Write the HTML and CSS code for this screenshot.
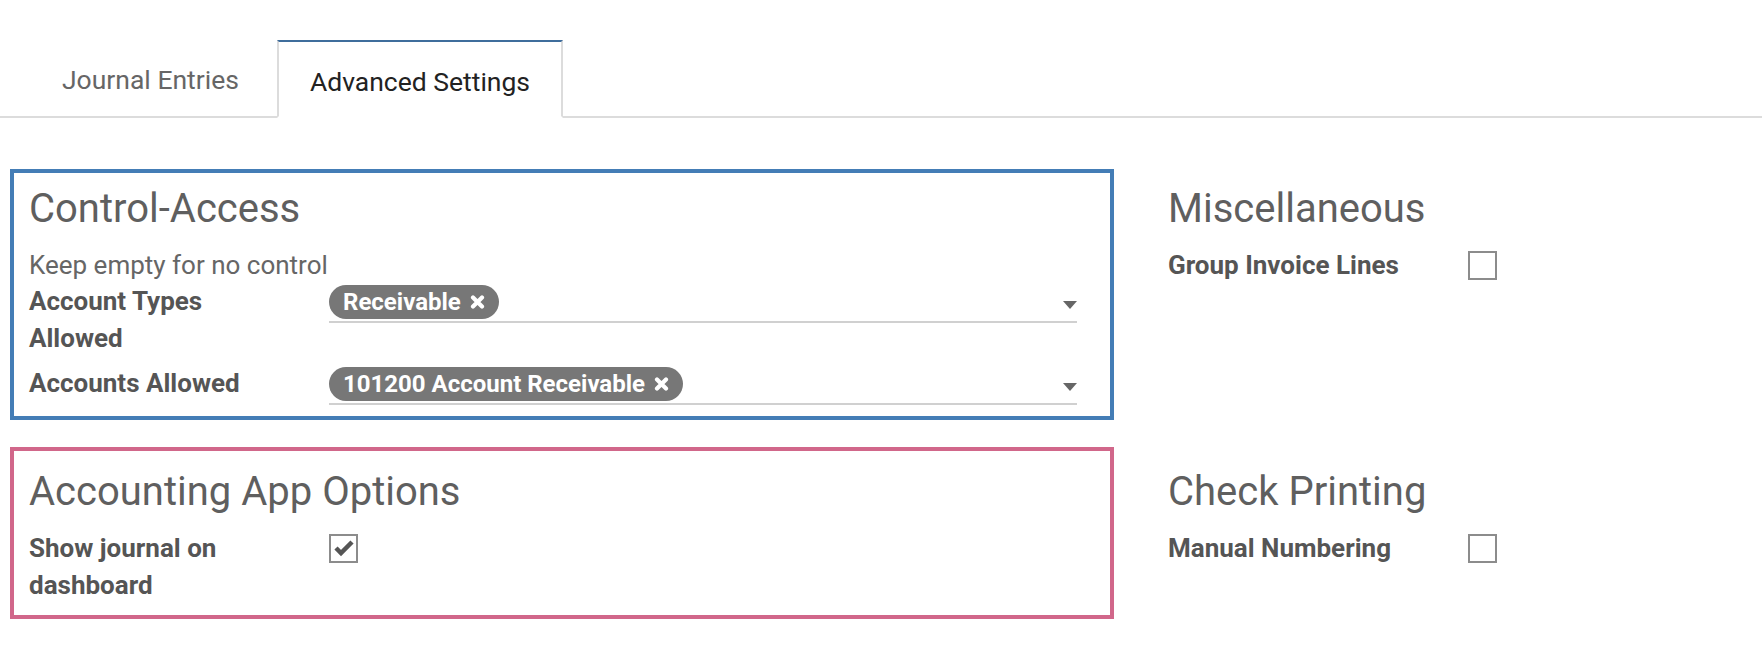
FILE: index.html
```html
<!DOCTYPE html>
<html lang="en">
<head>
    <meta charset="UTF-8">
    <meta name="viewport" content="width=device-width, initial-scale=1.0">
    <title>Journal - Advanced Settings</title>
    <link rel="stylesheet" href="styles.css">
</head>
<body>
<div class="notebook">
    <ul class="nav-tabs">
        <li class="tab">Journal Entries</li>
        <li class="tab active">Advanced Settings</li>
    </ul>
    <div class="tab-pane">
        <div class="group boxed boxed-blue">
            <h2 class="separator">Control-Access</h2>
            <div class="help">Keep empty for no control</div>
            <div class="field-row">
                <div class="label">Account Types Allowed</div>
                <div class="field">
                    <span class="tag">Receivable
                        <svg class="tag-x" viewBox="0 0 15 14" width="15" height="14"><path d="M3 2.5 L12 11.5 M12 2.5 L3 11.5"/></svg>
                    </span>
                    <span class="caret"></span>
                </div>
            </div>
            <div class="field-row">
                <div class="label">Accounts Allowed</div>
                <div class="field">
                    <span class="tag">101200 Account Receivable
                        <svg class="tag-x" viewBox="0 0 15 14" width="15" height="14"><path d="M3 2.5 L12 11.5 M12 2.5 L3 11.5"/></svg>
                    </span>
                    <span class="caret"></span>
                </div>
            </div>
        </div>

        <div class="group plain plain-top">
            <h2 class="separator">Miscellaneous</h2>
            <div class="field-row">
                <div class="label">Group Invoice Lines</div>
                <div class="check-cell"><span class="checkbox"></span></div>
            </div>
        </div>

        <div class="group boxed boxed-pink">
            <h2 class="separator">Accounting App Options</h2>
            <div class="field-row">
                <div class="label">Show journal on dashboard</div>
                <div class="check-cell">
                    <span class="checkbox">
                        <svg viewBox="0 0 25 25" width="25" height="25"><path d="M5 12 L10 17 L21 6"/></svg>
                    </span>
                </div>
            </div>
        </div>

        <div class="group plain plain-bottom">
            <h2 class="separator">Check Printing</h2>
            <div class="field-row">
                <div class="label">Manual Numbering</div>
                <div class="check-cell"><span class="checkbox"></span></div>
            </div>
        </div>
    </div>
</div>
</body>
</html>
```

FILE: styles.css
```css
body {
    margin: 0;
    background-color: #ffffff;
    font-family: Roboto, "Liberation Sans", Arial, sans-serif;
    font-size: 26px;
    line-height: 37px;
    color: #4c4c4c;
}

.nav-tabs {
    display: flex;
    gap: 5px;
    margin: 0;
    padding: 40px 0 0 29px;
    list-style: none;
    border-bottom: 2px solid #dcdcdc;
}

.tab {
    margin-bottom: -2px;
    padding: 19px 31px 18px;
    border: 2px solid transparent;
    font-size: 26.5px;
    color: #666666;
}

.tab.active {
    padding-top: 21px;
    padding-bottom: 16px;
    background-color: #ffffff;
    border-color: #dcdcdc;
    border-top-color: #3f6d9c;
    border-bottom-color: #ffffff;
    color: #222222;
}

.tab-pane {
    display: grid;
    grid-template-columns: 1104px 1fr;
    column-gap: 54px;
    row-gap: 27px;
    padding: 51px 0 0 10px;
    align-items: start;
}

.separator {
    margin: 0 0 16px;
    font-size: 40px;
    line-height: 44px;
    font-weight: 400;
    color: #5f5f5f;
}

.boxed {
    border: 4px solid;
    padding: 14px 15px 11px 15px;
}

.boxed-blue {
    border-color: #447db6;
}

.boxed-pink {
    border-color: #d1678a;
    padding-top: 19px;
    padding-bottom: 11px;
}

.plain-top {
    padding-top: 18px;
}

.plain-bottom {
    padding-top: 23px;
}

.help {
    line-height: 36px;
    color: #666666;
}

.field-row {
    display: grid;
    grid-template-columns: 300px 1fr;
    align-items: start;
}

.field-row + .field-row {
    margin-top: 8px;
}

.label {
    max-width: 250px;
    font-weight: 700;
    color: #555555;
}

.field {
    display: flex;
    align-items: center;
    margin-right: 18px;
    padding: 2px 0;
    border-bottom: 2px solid #d0d0d0;
}

.tag {
    display: inline-flex;
    align-items: center;
    gap: 9px;
    height: 34px;
    padding: 0 14px 0 14px;
    border-radius: 17px;
    background-color: #777777;
    color: #ffffff;
    font-size: 24px;
    font-weight: 700;
    line-height: 34px;
}

.tag-x path {
    fill: none;
    stroke: #ffffff;
    stroke-width: 4.2;
    stroke-linecap: round;
}

.caret {
    margin-left: auto;
    margin-top: 5px;
    width: 0;
    height: 0;
    border-left: 7.5px solid transparent;
    border-right: 7.5px solid transparent;
    border-top: 8px solid #666666;
}

.check-cell {
    padding-top: 4px;
}

.checkbox {
    display: block;
    width: 25px;
    height: 25px;
    border: 2px solid #8c8c8c;
    background-color: #ffffff;
}

.checkbox svg {
    display: block;
}

.checkbox path {
    fill: none;
    stroke: #555555;
    stroke-width: 4.5;
}
```
